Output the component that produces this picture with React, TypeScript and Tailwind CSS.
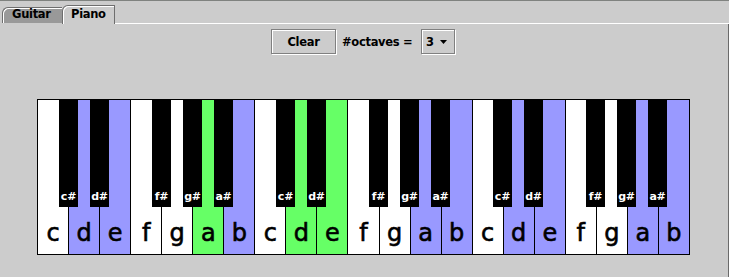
import React from "react";

type C = "w" | "b" | "g";
const whiteKeys: [string, C][] = [
  ["c", "w"], ["d", "b"], ["e", "b"], ["f", "w"], ["g", "w"], ["a", "g"], ["b", "b"],
  ["c", "w"], ["d", "g"], ["e", "g"], ["f", "w"], ["g", "w"], ["a", "b"], ["b", "b"],
  ["c", "w"], ["d", "b"], ["e", "b"], ["f", "w"], ["g", "w"], ["a", "b"], ["b", "b"],
];
const colorClass: Record<C, string> = {
  w: "bg-white",
  b: "bg-[#9999ff]",
  g: "bg-[#66ff66]",
};
const blackPattern: [number, string][] = [
  [0, "c#"], [1, "d#"], [3, "f#"], [4, "g#"], [5, "a#"],
];
const blackKeys: { left: number; label: string }[] = [];
for (let o = 0; o < 3; o++) {
  for (const [i, label] of blackPattern) {
    const s = o * 7 + i;
    blackKeys.push({ left: 21 + 31 * s, label });
  }
}

export default function App() {
  return (
    <div className="w-[729px] h-[277px] bg-[#cccccc] flex flex-col border-t border-[#7f827f] font-['DejaVu_Sans',sans-serif] text-black overflow-hidden">
      {/* tab strip */}
      <div className="h-[23px] flex items-end pl-[2px] shrink-0">
        <div className="w-[60px] h-[16px] mb-[1px] bg-[#999999] border-t border-l border-[#6e6e6e] rounded-tl-[6px] shadow-[inset_1px_1px_0_#ffffff] pl-[9px] text-[11.5px] leading-[13px] font-bold tracking-[-0.3px]">
          Guitar
        </div>
        <div className="w-[53px] h-[19px] bg-[#cccccc] border-t border-l border-r border-[#6e6e6e] rounded-tl-[6px] shadow-[inset_1px_1px_0_#ffffff] pl-[8px] pt-[2px] text-[11.5px] leading-[13px] font-bold tracking-[-0.3px]">
          Piano
        </div>
        <div className="flex-1 self-stretch border-b border-white" />
      </div>

      {/* content */}
      <div className="flex-1 flex flex-col border-r border-[#6a6a6a]">
        <div className="mt-[5px] h-[25px] flex justify-center pr-[2px] gap-[5px] text-[11.5px] font-bold tracking-[-0.3px]">
          <div className="w-[65px] h-[25px] border border-[#808080] shadow-[inset_1px_1px_0_#ffffff,1px_1px_0_#ffffff] flex items-center justify-center pt-[2px] leading-[13px]">
            Clear
          </div>
          <div className="w-[75px] flex items-center pl-px pt-[2px] leading-[13px] whitespace-nowrap">
            #octaves =
          </div>
          <div className="w-[34px] h-[25px] border border-[#808080] shadow-[inset_1px_1px_0_#ffffff,1px_1px_0_#ffffff] flex items-center pl-[4px] pt-[2px] leading-[13px]">
            <span>3</span>
            <svg width="7" height="4" viewBox="0 0 7 4" className="ml-[6px] mb-[1px]">
              <polygon points="0,0 7,0 3.5,4" fill="#000" />
            </svg>
          </div>
        </div>

        <div className="mt-[45px] ml-[37px] relative w-[653px] h-[156px] border border-black bg-black flex gap-px">
          {whiteKeys.map(([n, c], i) => (
            <div
              key={i}
              className={`flex-1 h-full ${colorClass[c]} flex flex-col justify-end items-center pb-[9px] text-[24px] leading-[24px] [-webkit-text-stroke:0.6px_#000]`}
            >
              {n}
            </div>
          ))}
          {blackKeys.map((k, i) => (
            <div
              key={i}
              className="absolute top-0 w-[19px] h-[107px] bg-black flex flex-col justify-end items-center pb-[5px] text-white text-[11px] leading-[11px] font-bold tracking-[-0.2px]"
              style={{ left: k.left }}
            >
              {k.label}
            </div>
          ))}
        </div>
      </div>
    </div>
  );
}
